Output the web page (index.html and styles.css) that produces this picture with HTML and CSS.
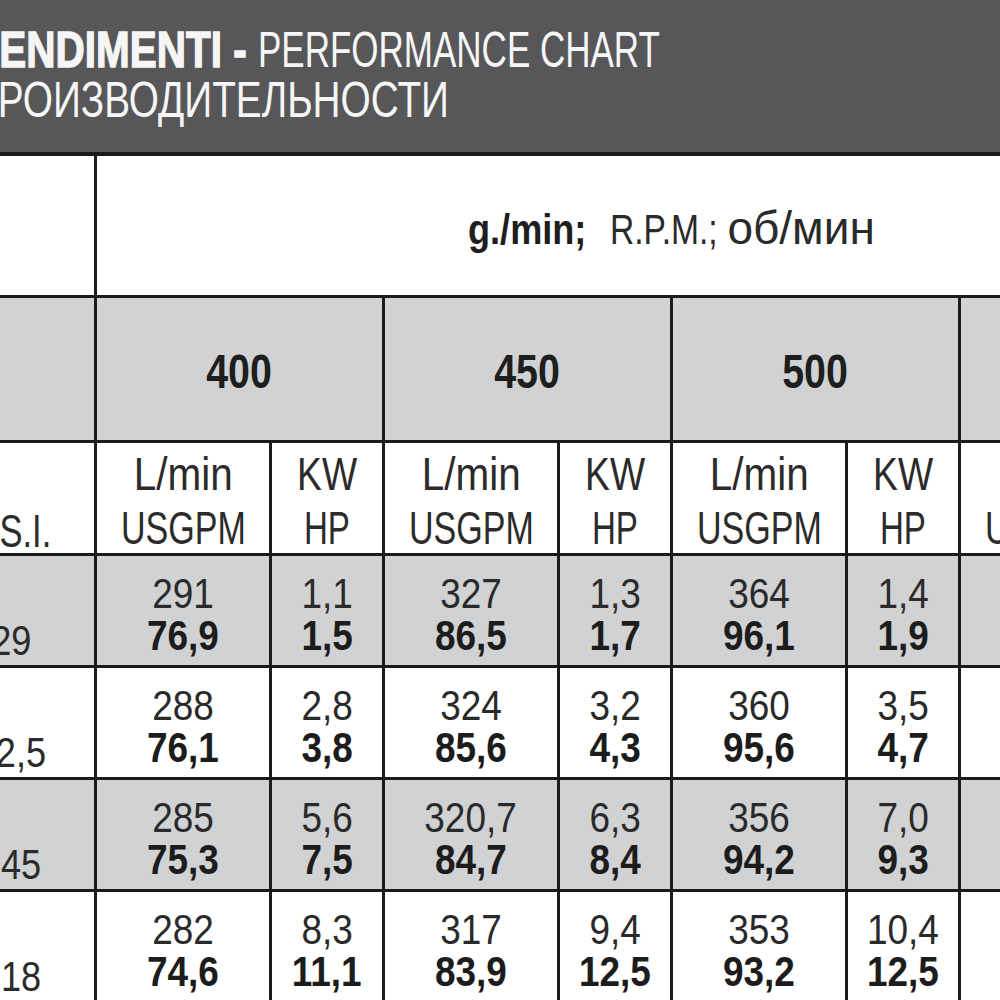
FILE: index.html
```html
<!DOCTYPE html>
<html lang="it">
<head>
<meta charset="utf-8">
<title>Rendimenti - Performance chart</title>
<link rel="stylesheet" href="styles.css">
</head>
<body>
<header class="banner">
  <div class="title">
    <div class="tline"><span class="sq tb">RENDIMENTI -</span><span class="sq tl1">PERFORMANCE CHART</span></div>
    <div class="tline"><span class="sq tl2">ПРОИЗВОДИТЕЛЬНОСТИ</span></div>
  </div>
</header>
<main class="chart">
  <div class="c corner"></div>
  <div class="c speed"><div class="speed-line"><b class="sq s1">g./min;</b><span class="sq s2">R.P.M.;</span><span class="s3">об/мин</span></div></div>

  <div class="c g"></div>
  <div class="c g rpm"><span>400</span></div>
  <div class="c g rpm"><span>450</span></div>
  <div class="c g rpm"><span>500</span></div>
  <div class="c g rpm"><span>550</span></div>

  <div class="c side unit-side"><span>P.S.I.</span></div>
  <div class="c unit"><span class="u-l">L/min</span><span class="u-us">USGPM</span></div>
  <div class="c unit"><span class="u-kw">KW</span><span class="u-hp">HP</span></div>
  <div class="c unit"><span class="u-l">L/min</span><span class="u-us">USGPM</span></div>
  <div class="c unit"><span class="u-kw">KW</span><span class="u-hp">HP</span></div>
  <div class="c unit"><span class="u-l">L/min</span><span class="u-us">USGPM</span></div>
  <div class="c unit"><span class="u-kw">KW</span><span class="u-hp">HP</span></div>
  <div class="c unit"><span class="u-l">L/min</span><span class="u-us">USGPM</span></div>
  <div class="c unit"><span class="u-kw">KW</span><span class="u-hp">HP</span></div>

  <div class="c g side"><span>29</span></div>
  <div class="c g d"><span>291</span><b>76,9</b></div>
  <div class="c g d"><span>1,1</span><b>1,5</b></div>
  <div class="c g d"><span>327</span><b>86,5</b></div>
  <div class="c g d"><span>1,3</span><b>1,7</b></div>
  <div class="c g d"><span>364</span><b>96,1</b></div>
  <div class="c g d"><span>1,4</span><b>1,9</b></div>
  <div class="c g d"><span>400</span><b>105,7</b></div>
  <div class="c g d"><span>1,5</span><b>2,1</b></div>

  <div class="c side"><span>72,5</span></div>
  <div class="c d"><span>288</span><b>76,1</b></div>
  <div class="c d"><span>2,8</span><b>3,8</b></div>
  <div class="c d"><span>324</span><b>85,6</b></div>
  <div class="c d"><span>3,2</span><b>4,3</b></div>
  <div class="c d"><span>360</span><b>95,6</b></div>
  <div class="c d"><span>3,5</span><b>4,7</b></div>
  <div class="c d"><span>396</span><b>104,6</b></div>
  <div class="c d"><span>3,9</span><b>5,2</b></div>

  <div class="c g side"><span>145</span></div>
  <div class="c g d"><span>285</span><b>75,3</b></div>
  <div class="c g d"><span>5,6</span><b>7,5</b></div>
  <div class="c g d"><span>320,7</span><b>84,7</b></div>
  <div class="c g d"><span>6,3</span><b>8,4</b></div>
  <div class="c g d"><span>356</span><b>94,2</b></div>
  <div class="c g d"><span>7,0</span><b>9,3</b></div>
  <div class="c g d"><span>392</span><b>103,6</b></div>
  <div class="c g d"><span>7,7</span><b>10,3</b></div>

  <div class="c side"><span>218</span></div>
  <div class="c d"><span>282</span><b>74,6</b></div>
  <div class="c d"><span>8,3</span><b>11,1</b></div>
  <div class="c d"><span>317</span><b>83,9</b></div>
  <div class="c d"><span>9,4</span><b>12,5</b></div>
  <div class="c d"><span>353</span><b>93,2</b></div>
  <div class="c d"><span>10,4</span><b>12,5</b></div>
  <div class="c d"><span>388</span><b>102,6</b></div>
  <div class="c d"><span>11,4</span><b>15,3</b></div>
</main>
</body>
</html>
```
FILE: styles.css
```css
html, body {
  margin: 0;
  padding: 0;
}

body {
  width: 1000px;
  height: 1000px;
  overflow: hidden;
  background: #ffffff;
  color: #262626;
  font-family: "Liberation Sans", Arial, sans-serif;
}

/* condensed look: glyphs are squeezed horizontally */
.sq {
  display: inline-block;
  transform-origin: left center;
}

.banner {
  box-sizing: border-box;
  height: 156px;
  padding-top: 25px;
  background: #57575a;
  border-bottom: 4px solid #1b1b1b;
}

.title {
  margin-left: -30px;
  color: #f6f6f6;
  font-size: 50px;
  line-height: 50px;
  white-space: nowrap;
}

.tb {
  font-weight: 700;
  transform: scaleX(0.81);
  margin-right: -65px;
  -webkit-text-stroke: 1.4px #f6f6f6;
}

.tl1 {
  font-weight: 400;
  margin-left: 11px;
  transform: scaleX(0.70);
}

.tl2 {
  font-weight: 400;
  transform: scaleX(0.775);
}

.chart {
  display: grid;
  grid-template-columns: 166px repeat(4, 172px 110px);
  grid-template-rows: 139px 142px 110px repeat(4, 109px);
  gap: 3px;
  width: max-content;
  margin-left: -72px;
  background: #1b1b1b;
}

.c {
  display: flex;
  flex-direction: column;
  align-items: center;
  justify-content: center;
  box-sizing: border-box;
  background: #ffffff;
  white-space: nowrap;
}

.g {
  background: #d1d2d4;
}

.speed {
  grid-column: 2 / -1;
  padding-top: 6px;
}

.speed-line {
  font-size: 42px;
  line-height: 48px;
  color: #2a2a2a;
}

.s1 {
  font-weight: 700;
  color: #1e1e1e;
  transform: scaleX(0.86);
  margin-right: 4px;
}

.s2 {
  font-weight: 400;
  transform: scaleX(0.80);
  margin-right: -17px;
}

.s3 {
  font-size: 46px;
}

.rpm {
  grid-column: span 2;
  font-size: 48px;
  font-weight: 700;
  color: #1e1e1e;
  padding-top: 4px;
}

.rpm span {
  transform: scaleX(0.82);
}

.unit {
  justify-content: flex-start;
  padding-top: 4px;
  font-size: 46px;
  line-height: 54px;
  color: #2b2b2b;
}

.u-l {
  transform: scaleX(0.88);
}

.u-us {
  transform: scaleX(0.74);
}

.u-kw {
  transform: scaleX(0.81);
}

.u-hp {
  transform: scaleX(0.72);
}

.side {
  justify-content: flex-end;
  font-size: 42px;
  line-height: 42px;
  padding-bottom: 3px;
  color: #2b2b2b;
}

.side span {
  transform: scaleX(0.86);
}

.unit-side {
  font-size: 46px;
  line-height: 44px;
  padding-bottom: 0;
}

.unit-side span {
  transform: scaleX(0.75);
}

.d {
  justify-content: flex-start;
  padding-top: 17px;
  font-size: 42px;
  line-height: 42px;
  color: #2a2a2a;
}

.d span,
.d b {
  transform: scaleX(0.88);
}

.d b {
  font-weight: 700;
  color: #1c1c1c;
}
```
